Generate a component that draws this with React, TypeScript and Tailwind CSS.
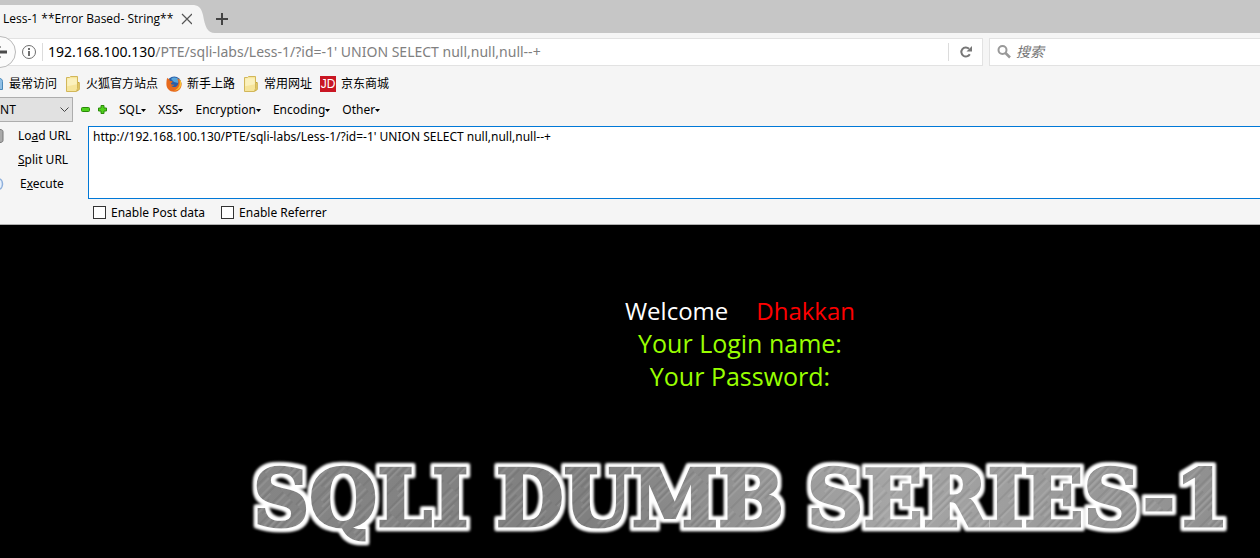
import React, { useState } from 'react';

const FONT = "font-['Open_Sans','Noto_Sans_CJK_SC',sans-serif]";
const WIDE_FONT = "font-['Noto_Sans','Noto_Sans_CJK_SC',sans-serif]";

const FolderIcon = () => (
  <svg width="16" height="16" viewBox="0 0 16 16" aria-hidden="true">
    <path d="M11 6.5h3.200v6.800l-1.200 1.400h-2z" fill="#ecd476" stroke="#c4a436" />
    <path d="M1.500 1.500h3l1-1h7v12l-1 3h-10z" fill="#f6e59b" stroke="#d2b75a" />
    <path d="M2.200 2.200h9.600v6l-9.600 2z" fill="#fbf1bd" />
  </svg>
);

const FirefoxIcon = () => (
  <svg width="16" height="16" viewBox="0 0 16 16" aria-hidden="true">
    <circle cx="8.2" cy="7.6" r="7.1" fill="#2a5fa8" />
    <path d="M5 3c2-2 6-2 8 1l-1 3-4-1z" fill="#58a6dc" />
    <path
      d="M1.2 1.8c.6.9 1.2 1.2 2.4 1.2-.5.8-.2 1.5 1 1.9 1.2.1 2 .3 2 .9-.2.8-1.6.9-1.8 2 .9 1.3 2.3.7 3.7.9-1 1.3-2.6 1.2-3.4 1 2.7 2.8 6.5 1 7.2-2.3.3-2.2-.4-4-1.5-5.1 3.8 1.2 5.3 4.5 4.6 7.6C14.6 13.5 11.5 15.8 8 15.8 3.6 15.8.4 12.5.4 8.3.4 5.8.6 3.6 1.2 1.8z"
      fill="#e66a1e"
    />
    <path d="M13.3 2.8c2.5 2.5 2.7 6.2.8 9-1.5 2.1-4 3-6.2 2.6 4.5-.8 7-5.3 5.4-11.6z" fill="#fbc02f" />
  </svg>
);

const JdIcon = () => (
  <span className="flex size-4 items-center justify-center bg-[#c91623] font-['Liberation_Sans',sans-serif] text-xs leading-none text-white">
    JD
  </span>
);

const Caret = () => (
  <svg width="5" height="3" viewBox="0 0 5 3" className="mt-0.5" aria-hidden="true">
    <path d="M0 0h5L2.5 3z" fill="#000" />
  </svg>
);

const bookmarks = [
  { label: '火狐官方站点', icon: <FolderIcon /> },
  { label: '新手上路', icon: <FirefoxIcon /> },
  { label: '常用网址', icon: <FolderIcon /> },
  { label: '京东商城', icon: <JdIcon /> },
];

const menus = ['SQL', 'XSS', 'Encryption', 'Encoding', 'Other'];

const TabStrip = () => (
  <div className="flex h-[33px] items-end bg-[#c6c6c6]">
    <div className="flex h-7 items-center bg-[#f5f5f5] pl-[3px] text-xs text-black">
      <span className="whitespace-nowrap">Less-1 **Error Based- String**</span>
      <button type="button" aria-label="Close tab" className="ml-2">
        <svg width="12" height="12" viewBox="0 0 12 12" stroke="#555" strokeWidth="1.2">
          <path d="M1 1l10 10M11 1L1 11" />
        </svg>
      </button>
    </div>
    <svg width="24" height="28" viewBox="0 0 24 28" className="-ml-px" aria-hidden="true">
      <path d="M0 0c6 0 9 2 11 10 2 11 4 18 12 18H0z" fill="#f5f5f5" />
    </svg>
    <button type="button" aria-label="New tab" className="mb-2">
      <svg width="12" height="12" viewBox="0 0 12 12" stroke="#444" strokeWidth="2">
        <path d="M6 0v12M0 6h12" />
      </svg>
    </button>
  </div>
);

const NavBar = () => (
  <div className="flex h-[37px] items-center bg-[#f5f5f5]">
    <button
      type="button"
      aria-label="Back"
      className="z-10 -ml-4 flex size-8 shrink-0 items-center justify-center rounded-full border border-[#b9b9b9] bg-[#fbfbfb]"
    >
      <svg width="16" height="14" viewBox="0 0 16 14" fill="none" stroke="#4a4a4a" strokeWidth="3">
        <path d="M2 7h13M8 1L2 7l6 6" />
      </svg>
    </button>
    <div className="-ml-2 flex h-7 flex-1 items-center border border-[#e2e2e2] bg-white pl-3">
      <svg width="16" height="16" viewBox="0 0 16 16" className="shrink-0" aria-hidden="true">
        <circle cx="8" cy="8" r="6.5" fill="none" stroke="#6e6e6e" />
        <path d="M7 4h2v2H7zM7 7h2v5H7z" fill="#6e6e6e" />
      </svg>
      <div className="ml-[5px] h-[18px] w-px bg-[#dcdcdc]" />
      <div className={`${WIDE_FONT} ml-[5px] flex-1 whitespace-nowrap text-sm text-[#808080]`}>
        <span className="text-black">192.168.100.130</span>/PTE/sqli-labs/Less-1/?id=-1' UNION SELECT null,null,null--+
      </div>
      <button type="button" aria-label="Reload" className="flex h-[18px] w-[34px] items-center justify-center border-l border-[#dcdcdc]">
        <svg width="12" height="12" viewBox="0 0 12 12" aria-hidden="true">
          <path d="M9.8 8.2A4.500 4.500 0 1 1 9 2.800" fill="none" stroke="#777" strokeWidth="2" />
          <path d="M12 0v5.500H6.500z" fill="#777" />
        </svg>
      </button>
    </div>
    <label className="ml-1.5 flex h-7 w-[271px] items-center border border-r-0 border-[#e2e2e2] bg-white pl-[7px]">
      <svg width="14" height="14" viewBox="0 0 14 14" fill="none" stroke="#999" aria-hidden="true">
        <circle cx="5.5" cy="5" r="4" strokeWidth="2" />
        <path d="M8.5 8l4.5 4.5" strokeWidth="2.5" />
      </svg>
      <input
        type="text"
        aria-label="搜索"
        placeholder="搜索"
        className="ml-[5px] min-w-0 flex-1 text-sm italic outline-none placeholder:text-[#757575]"
      />
    </label>
  </div>
);

const BookmarksBar = () => (
  <div className="flex h-[27px] items-center gap-2 bg-[#f5f5f5] text-xs text-black">
    <a href="#" className="flex items-center gap-1.5">
      <svg width="3" height="16" viewBox="0 0 3 16" aria-hidden="true">
        <path d="M0 2.500c1 0 2.500 1 2.500 3v8H0" fill="#8fbfe6" stroke="#4a88b8" />
      </svg>
      最常访问
    </a>
    {bookmarks.map(b => (
      <a key={b.label} href="#" className="flex items-center gap-[5px] whitespace-nowrap">
        {b.icon}
        {b.label}
      </a>
    ))}
  </div>
);

const HackBar = () => {
  const [url, setUrl] = useState("http://192.168.100.130/PTE/sqli-labs/Less-1/?id=-1' UNION SELECT null,null,null--+");
  const [post, setPost] = useState(false);
  const [referrer, setReferrer] = useState(false);

  const checkbox = 'size-[13px] appearance-none border border-[#333] bg-white checked:bg-[#333]';

  return (
    <div className={`${WIDE_FONT} border-b border-[#b0b0b0] bg-[#f5f5f5] text-xs text-black`}>
      <div className="flex h-[25px] items-center">
        <div className="relative -ml-2">
          <select
            aria-label="Type"
            className="h-[25px] w-[81px] appearance-none border border-[#adadad] bg-[#e1e1e1] pl-[3px] text-xs outline-none"
          >
            <option>INT</option>
          </select>
          <svg width="9" height="6" viewBox="0 0 9 6" className="pointer-events-none absolute top-2.5 right-1" fill="none" stroke="#444">
            <path d="M.5.5l4 4 4-4" />
          </svg>
        </div>
        <button type="button" aria-label="Remove" className="ml-2">
          <svg width="9" height="9" viewBox="0 0 9 9">
            <rect x=".5" y="2.5" width="8" height="4" rx="1" fill="#4fd01c" stroke="#2a8a08" />
          </svg>
        </button>
        <button type="button" aria-label="Add" className="ml-2">
          <svg width="9" height="9" viewBox="0 0 9 9">
            <path d="M3 .5h3V3h2.500v3H6v2.500H3V6H.5V3H3z" fill="#4fd01c" stroke="#2a8a08" />
          </svg>
        </button>
        <div className="ml-3 flex gap-3">
          {menus.map(m => (
            <button key={m} type="button" className="flex items-center">
              {m}
              <Caret />
            </button>
          ))}
        </div>
      </div>

      <div className="flex pt-1">
        <div className="flex w-[88px] shrink-0 flex-col">
          <button type="button" className="flex h-5 items-center">
            <svg width="4" height="16" viewBox="0 0 4 16" aria-hidden="true">
              <path d="M0 1.500c2 0 3 1 3 2v9c0 1-1 2-3 2" fill="#aaa" stroke="#777" />
            </svg>
            <span className="ml-3.5">Lo<u>a</u>d URL</span>
          </button>
          <button type="button" className="mt-1 flex h-5 items-center pl-[18px]">
            <span><u>S</u>plit URL</span>
          </button>
          <button type="button" className="mt-1 flex h-5 items-center">
            <svg width="4" height="14" viewBox="0 0 4 14" aria-hidden="true">
              <path d="M-2 1.500c6 0 6 11 0 11" fill="#e8f1fc" stroke="#8fb0dc" strokeWidth="1.5" />
            </svg>
            <span className="ml-4">E<u>x</u>ecute</span>
          </button>
        </div>
        <div className="flex-1">
          <textarea
            aria-label="URL"
            value={url}
            onChange={e => setUrl(e.target.value)}
            spellCheck={false}
            className="block h-[73px] w-full resize-none border border-r-0 border-[#0078d7] bg-white px-1 py-0.5 text-xs outline-none"
          />
          <div className="flex h-[25px] items-center gap-4 pl-[5px] pt-0.5">
            <label className="flex items-center gap-[5px]">
              <input type="checkbox" checked={post} onChange={e => setPost(e.target.checked)} className={checkbox} />
              Enable Post data
            </label>
            <label className="flex items-center gap-[5px]">
              <input type="checkbox" checked={referrer} onChange={e => setReferrer(e.target.checked)} className={checkbox} />
              Enable Referrer
            </label>
          </div>
        </div>
      </div>
    </div>
  );
};

const Banner = () => (
  <svg width="1000" height="110" viewBox="0 0 1000 110" className="shrink-0" role="img" aria-label="SQLI DUMB SERIES-1">
    <defs>
      <linearGradient id="steel" x1="0" y1="0" x2="1" y2="0">
        <stop offset="0" stopColor="#858585" />
        <stop offset="0.35" stopColor="#808080" />
        <stop offset="0.65" stopColor="#a6a6a6" />
        <stop offset="1" stopColor="#8e8e8e" />
      </linearGradient>
      <pattern id="scratches" width="23" height="61" patternUnits="userSpaceOnUse" patternTransform="rotate(45)">
        <path d="M2 0v40M7 10v34M12 20v40M18 0v28" stroke="#fff" strokeOpacity="0.18" />
        <path d="M5 0v40M10 15v46M15 0v30M21 20v41" stroke="#000" strokeOpacity="0.12" />
      </pattern>
      <pattern id="brushed" width="1000" height="110" patternUnits="userSpaceOnUse">
        <rect width="1000" height="110" fill="url(#steel)" />
        <rect width="1000" height="110" fill="url(#scratches)" />
      </pattern>
      <filter id="halo" x="-5%" y="-25%" width="110%" height="150%">
        <feMorphology in="SourceAlpha" operator="dilate" radius="3" result="wide" />
        <feGaussianBlur in="wide" stdDeviation="1.6" result="soft" />
        <feFlood floodColor="#fff" />
        <feComposite in2="soft" operator="in" result="glow" />
        <feMerge>
          <feMergeNode in="glow" />
          <feMergeNode in="glow" />
          <feMergeNode in="SourceGraphic" />
        </feMerge>
      </filter>
    </defs>
    <g
      className="font-['DejaVu_Serif',serif] text-[78px] font-bold"
      fill="url(#brushed)"
      stroke="url(#brushed)"
      strokeWidth="3"
      filter="url(#halo)"
    >
      <text x="13" y="77">SQLI</text>
      <text x="256" y="77">DUMB</text>
      <text x="567" y="77">SERIES-1</text>
    </g>
  </svg>
);

export default function App() {
  return (
    <div className={`${FONT} min-h-screen overflow-hidden bg-black`}>
      <TabStrip />
      <NavBar />
      <BookmarksBar />
      <HackBar />
      <main className="flex flex-col items-center pt-[69px] pl-[220px] text-[25px] leading-[33px] text-[#99ff00]">
        <p className="flex gap-7 text-2xl leading-[33px]">
          <span className="text-white">Welcome</span>
          <span className="text-[#ff0000]">Dhakkan</span>
        </p>
        <p>Your Login name:</p>
        <p>Your Password:</p>
        <div className="mt-14">
          <Banner />
        </div>
      </main>
    </div>
  );
}
